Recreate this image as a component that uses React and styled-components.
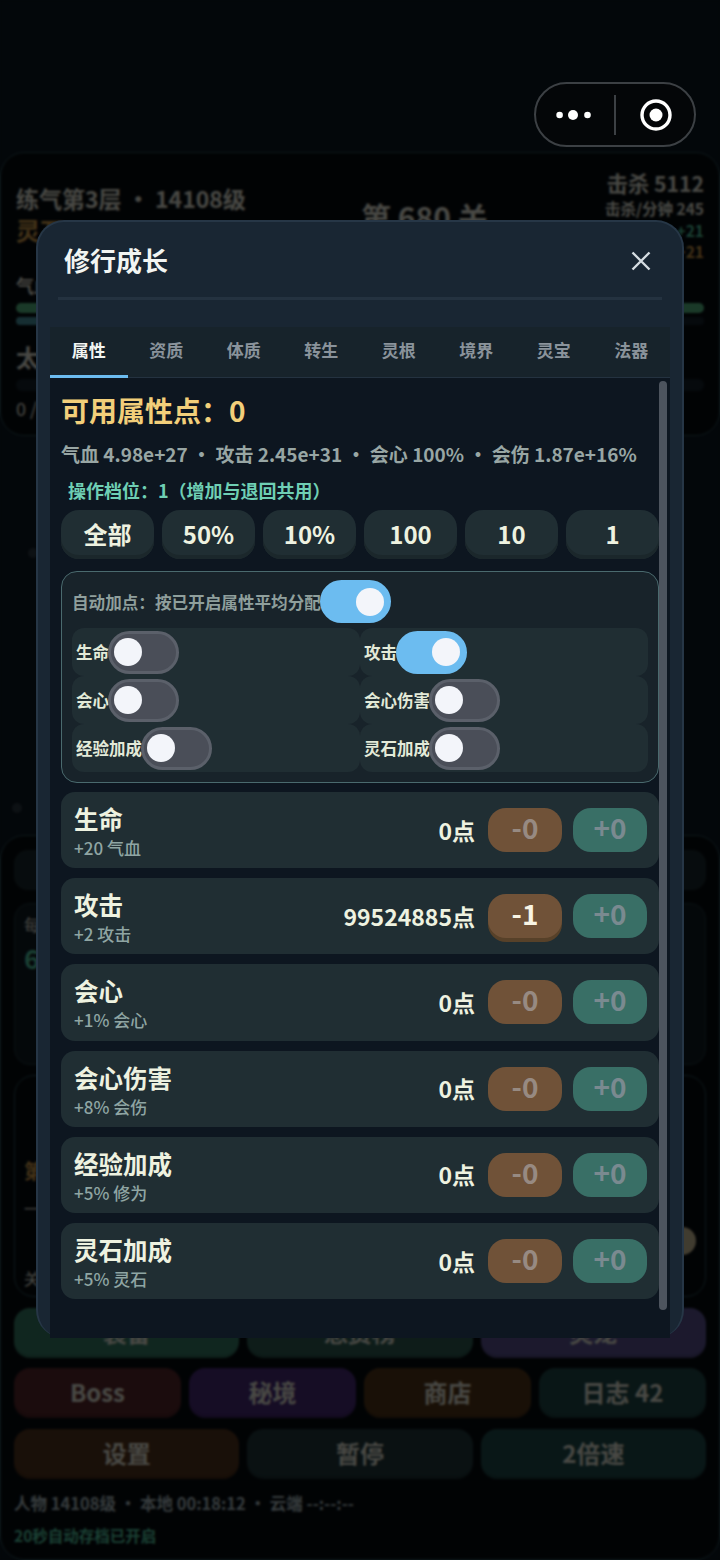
import React from "react"
import styled, { createGlobalStyle } from "styled-components"

const stepOptions = ["全部", "50%", "10%", "100", "10", "1"]
const tabs = ["属性", "资质", "体质", "转生", "灵根", "境界", "灵宝", "法器"]

const autoOptions = [
  { label: "生命", on: false },
  { label: "攻击", on: true },
  { label: "会心", on: false },
  { label: "会心伤害", on: false },
  { label: "经验加成", on: false },
  { label: "灵石加成", on: false },
]

const attrs = [
  { name: "生命", desc: "+20 气血", points: "0点", minus: "-0" },
  { name: "攻击", desc: "+2 攻击", points: "99524885点", minus: "-1", canMinus: true },
  { name: "会心", desc: "+1% 会心", points: "0点", minus: "-0" },
  { name: "会心伤害", desc: "+8% 会伤", points: "0点", minus: "-0" },
  { name: "经验加成", desc: "+5% 修为", points: "0点", minus: "-0" },
  { name: "灵石加成", desc: "+5% 灵石", points: "0点", minus: "-0" },
]

const App = () => (
  <Page>
    <GlobalStyle />
    <HeroCard>
      <HeroTop>
        <HeroLeft>
          <HeroName>练气第3层 · 14108级</HeroName>
          <HeroGold>灵石 2.31e+18</HeroGold>
        </HeroLeft>
        <StageTitle>第 680 关</StageTitle>
        <HeroStats>
          <KillCount>击杀 5112</KillCount>
          <SmallStat>击杀/分钟 245</SmallStat>
          <SmallStat color="#58d4ac">修为 +21</SmallStat>
          <SmallStat color="#e0a850">灵石 +21</SmallStat>
        </HeroStats>
      </HeroTop>
      <BarLabel>气血</BarLabel>
      <HpBar />
      <ExpBar>
        <ExpFill />
      </ExpBar>
      <HeroRealm>太初</HeroRealm>
      <FaintBar />
      <HeroProgress>0 / 100</HeroProgress>
    </HeroCard>

    <Spark top={548} left={28} />
    <Spark top={803} left={12} />

    <MainCard>
      <GhostBox />
      <OutputBox>
        <GhostLabel>每秒</GhostLabel>
        <GhostValue>6.21e+30</GhostValue>
      </OutputBox>
      <StageBox>
        <GhostGold>第 680 关</GhostGold>
        <GhostLabel gap={10}>一</GhostLabel>
        <GhostLabel gap={46}>关卡</GhostLabel>
        <SliderThumb />
      </StageBox>
      <ActionRow columns={3}>
        <ActionButton color="#38806a">装备</ActionButton>
        <ActionButton color="#2f6056">悬赏榜</ActionButton>
        <ActionButton color="#5e5698">灵宠</ActionButton>
      </ActionRow>
      <ActionRow columns={4}>
        <ActionButton color="#5a282c">Boss</ActionButton>
        <ActionButton color="#4a2c7c">秘境</ActionButton>
        <ActionButton color="#56381a">商店</ActionButton>
        <ActionButton color="#204a4a">日志 42</ActionButton>
      </ActionRow>
      <ActionRow columns={3}>
        <ActionButton color="#56361e">设置</ActionButton>
        <ActionButton color="#223a3e">暂停</ActionButton>
        <ActionButton color="#204e4e">2倍速</ActionButton>
      </ActionRow>
      <FooterLine>人物 14108级 · 本地 00:18:12 · 云端 --:--:--</FooterLine>
      <FooterNote>20秒自动存档已开启</FooterNote>
    </MainCard>

    <Backdrop />

    <Capsule>
      <svg width="36" height="14" viewBox="0 0 36 14">
        <circle cx="3.6" cy="7" r="3.3" fill="#fff" />
        <circle cx="17" cy="7" r="5" fill="#fff" />
        <circle cx="31.5" cy="7" r="3.3" fill="#fff" />
      </svg>
      <CapsuleDivider />
      <RecordIcon width="32" height="32" viewBox="0 0 32 32">
        <circle cx="16" cy="16" r="14" fill="none" stroke="#fff" strokeWidth="3.4" />
        <circle cx="16" cy="16" r="6.5" fill="#fff" />
      </RecordIcon>
    </Capsule>

    <Modal>
      <ModalHeader>
        <ModalTitle>修行成长</ModalTitle>
        <CloseIcon width="20" height="20" viewBox="0 0 20 20">
          <path d="M1.5 1.5 L18.5 18.5 M18.5 1.5 L1.5 18.5" stroke="#d6dde2" strokeWidth="2.4" fill="none" />
        </CloseIcon>
      </ModalHeader>
      <TabStrip>
        {tabs.map((tab, i) => (
          <Tab key={tab} active={i === 0}>
            {tab}
          </Tab>
        ))}
      </TabStrip>
      <ModalBody>
        <PointsTitle>可用属性点：0</PointsTitle>
        <StatsLine>气血 4.98e+27 · 攻击 2.45e+31 · 会心 100% · 会伤 1.87e+16%</StatsLine>
        <StepLabel>操作档位：1（增加与退回共用）</StepLabel>
        <StepRow>
          {stepOptions.map(step => (
            <StepButton key={step}>{step}</StepButton>
          ))}
        </StepRow>
        <AutoBox>
          <AutoHead>
            <AutoTitle>自动加点：按已开启属性平均分配</AutoTitle>
            <Switch on />
          </AutoHead>
          <AutoGrid>
            {autoOptions.map(opt => (
              <AutoCell key={opt.label}>
                <AutoLabel>{opt.label}</AutoLabel>
                <Switch on={opt.on} />
              </AutoCell>
            ))}
          </AutoGrid>
        </AutoBox>
        <AttrList>
          {attrs.map(attr => (
            <AttrRow key={attr.name}>
              <AttrInfo>
                <AttrName>{attr.name}</AttrName>
                <AttrDesc>{attr.desc}</AttrDesc>
              </AttrInfo>
              <AttrPoints>{attr.points}</AttrPoints>
              <MinusButton enabled={attr.canMinus}>{attr.minus}</MinusButton>
              <PlusButton>+0</PlusButton>
            </AttrRow>
          ))}
        </AttrList>
        <ScrollThumb />
      </ModalBody>
    </Modal>
  </Page>
)

export default App

const Switch = ({ on }) => (
  <SwitchTrack on={on}>
    <SwitchKnob />
  </SwitchTrack>
)

const GlobalStyle = createGlobalStyle`
  html, body {
    margin: 0;
    padding: 0;
    background: #0c1822;
    font-family: "Noto Sans CJK SC", "Noto Sans", sans-serif;
  }
  * {
    box-sizing: border-box;
  }
`

const Page = styled.div`
  position: relative;
  width: 720px;
  height: 1560px;
  padding-top: 152px;
  overflow: hidden;
  background: #0c1822;
`

const Backdrop = styled.div`
  position: absolute;
  inset: 0;
  background: rgba(0, 0, 0, 0.7);
  backdrop-filter: blur(1px);
`

const Spark = styled.div`
  position: absolute;
  top: ${props => props.top}px;
  left: ${props => props.left}px;
  width: 10px;
  height: 10px;
  border-radius: 50%;
  background: #2c3a44;
`

const Capsule = styled.div`
  position: absolute;
  top: 82px;
  left: 534px;
  width: 162px;
  height: 65px;
  display: flex;
  align-items: center;
  gap: 22px;
  padding-left: 20px;
  border: 2px solid #3c4044;
  border-radius: 33px;
  background: #040608;
`

const CapsuleDivider = styled.div`
  width: 2px;
  height: 40px;
  background: #3c4044;
`

const RecordIcon = styled.svg`
  margin-left: 2px;
`

const HeroCard = styled.section`
  height: 284px;
  padding: 18px 15px 0;
  border: 1px solid #2b5059;
  border-radius: 24px;
  background: #060c10;
  color: #f0f0e2;
`

const HeroTop = styled.div`
  display: flex;
  height: 100px;
`

const HeroLeft = styled.div`
  flex: none;
  width: 345px;
`

const HeroName = styled.div`
  margin-top: 10px;
  font-size: 23px;
  line-height: 34px;
  font-weight: 700;
`

const HeroGold = styled.div`
  font-size: 24px;
  line-height: 30px;
  font-weight: 700;
  color: #e0a850;
`

const StageTitle = styled.div`
  flex: none;
  margin-top: 23px;
  font-size: 30px;
  line-height: 44px;
  font-weight: 700;
`

const HeroStats = styled.div`
  display: flex;
  flex-direction: column;
  align-items: flex-end;
  margin-left: auto;
  margin-top: -3px;
`

const KillCount = styled.div`
  font-size: 21.2px;
  line-height: 30px;
  font-weight: 700;
`

const SmallStat = styled.div`
  font-size: 15.5px;
  line-height: 21.5px;
  font-weight: 700;
  color: ${props => props.color || "#f0f0e2"};
`

const BarLabel = styled.div`
  margin-top: 2px;
  font-size: 18px;
  line-height: 24px;
  font-weight: 700;
`

const HpBar = styled.div`
  height: 10px;
  margin-top: 6px;
  border-radius: 5px;
  background: #58c088;
`

const ExpBar = styled.div`
  height: 8px;
  margin-top: 4px;
  border-radius: 4px;
  background: #14222c;
  overflow: hidden;
`

const ExpFill = styled.div`
  width: 20%;
  height: 100%;
  background: #4a9aa8;
`

const FaintBar = styled.div`
  height: 12px;
  margin-top: 4px;
  border-radius: 6px;
  background: #14222c;
`

const HeroRealm = styled.div`
  margin-top: 14px;
  font-size: 24px;
  line-height: 36px;
  font-weight: 700;
`

const HeroProgress = styled.div`
  margin-top: 5px;
  font-size: 18px;
  line-height: 24px;
`

const MainCard = styled.section`
  height: 725px;
  margin-top: 399px;
  padding: 14px 13px 0;
  border: 1px solid #2b5059;
  border-radius: 24px;
  background: #060c10;
  color: #f0f0e2;
`

const GhostBox = styled.div`
  height: 40px;
  border-radius: 14px;
  background: #1a2b30;
`

const OutputBox = styled.div`
  height: 162px;
  margin-top: 13px;
  padding: 8px 9px;
  border: 1px solid #1f3a40;
  border-radius: 16px;
  background: #101c22;
`

const StageBox = styled.div`
  position: relative;
  height: 222px;
  margin-top: 10px;
  padding: 80px 9px 0;
  border: 1px solid #2b5059;
  border-radius: 20px;
`

const SliderThumb = styled.div`
  position: absolute;
  top: 151px;
  right: 9px;
  width: 28px;
  height: 28px;
  border-radius: 50%;
  background: #d8c8a0;
`

const GhostLabel = styled.div`
  margin-top: ${props => props.gap || 0}px;
  font-size: 16px;
  line-height: 24px;
`

const GhostValue = styled.div`
  margin-top: 4px;
  font-size: 26px;
  line-height: 36px;
  font-weight: 700;
  color: #58d4ac;
`

const GhostGold = styled.div`
  font-size: 20px;
  line-height: 30px;
  font-weight: 700;
  color: #e0a850;
`

const ActionRow = styled.div`
  display: grid;
  grid-template-columns: repeat(${props => props.columns}, 1fr);
  gap: 8px;
  margin-top: 10.5px;
`

const ActionButton = styled.div`
  height: 50px;
  border-radius: 16px;
  background: ${props => props.color};
  box-shadow: inset 0 -3px 0 rgba(0, 0, 0, 0.15);
  text-align: center;
  font-size: 24px;
  line-height: 47px;
  font-weight: 700;
  color: #f0f0e2;
`

const FooterLine = styled.div`
  margin-top: 12px;
  font-size: 16.5px;
  line-height: 24px;
  font-weight: 700;
  color: #b4c5cb;
`

const FooterNote = styled.div`
  margin-top: 8px;
  font-size: 15.5px;
  line-height: 24px;
  font-weight: 700;
  color: #58d4ac;
`

const Modal = styled.div`
  position: absolute;
  top: 220px;
  left: 36px;
  width: 648px;
  height: 1118px;
  padding: 0 12px;
  border: 2px solid #263646;
  border-bottom: 0;
  border-radius: 28px;
  background: #192633;
  display: flex;
  flex-direction: column;
`

const ModalHeader = styled.div`
  display: flex;
  align-items: center;
  justify-content: space-between;
  height: 78px;
  margin: 0 8px;
  padding: 0 24px 0 6px;
  border-bottom: 3px solid #243240;
  flex: none;
`

const ModalTitle = styled.div`
  font-size: 26px;
  line-height: 38px;
  font-weight: 700;
  color: #f2f5f2;
`

const CloseIcon = styled.svg`
  margin-right: -13px;
  margin-top: 3px;
`

const TabStrip = styled.div`
  display: grid;
  grid-template-columns: repeat(8, 1fr);
  height: 51px;
  margin-top: 27px;
  flex: none;
  border-bottom: 1px solid #243240;
  background: #17232b;
`

const Tab = styled.div`
  height: 51px;
  text-align: center;
  font-size: 17px;
  line-height: 46px;
  font-weight: 700;
  color: ${props => (props.active ? "#f2f5f2" : "#8a939b")};
  border-bottom: 3px solid ${props => (props.active ? "#6cbcf0" : "transparent")};
`

const ModalBody = styled.div`
  position: relative;
  flex: 1;
  padding: 12px 11px 0;
  background: #0d1620;
`

const ScrollThumb = styled.div`
  position: absolute;
  top: 3px;
  right: 3px;
  width: 8px;
  height: 929px;
  border-radius: 4px;
  background: #4d545e;
`

const PointsTitle = styled.div`
  font-size: 28px;
  line-height: 40px;
  font-weight: 700;
  color: #f2cf7a;
`

const StatsLine = styled.div`
  margin-top: 10px;
  font-size: 19px;
  line-height: 28px;
  font-weight: 700;
  color: #98a6a4;
  white-space: nowrap;
`

const StepLabel = styled.div`
  margin-top: 10px;
  padding-left: 7px;
  font-size: 18px;
  line-height: 24px;
  font-weight: 700;
  color: #6fcfb4;
`

const StepRow = styled.div`
  display: grid;
  grid-template-columns: repeat(6, 1fr);
  gap: 8px;
  margin-top: 8px;
`

const StepButton = styled.div`
  height: 49px;
  border-radius: 18px;
  background: #202e33;
  box-shadow: inset 0 -4px 0 #1b272b;
  text-align: center;
  font-size: 24px;
  line-height: 47px;
  font-weight: 700;
  color: #eef2e0;
`

const AutoBox = styled.div`
  height: 212px;
  margin-top: 12px;
  padding: 8px 10px 0;
  border: 1px solid #4a6a6e;
  border-radius: 16px;
  background: #18232a;
`

const AutoHead = styled.div`
  display: flex;
  align-items: center;
  height: 43px;
  margin-bottom: 5px;
`

const AutoTitle = styled.div`
  margin-right: -1px;
  font-size: 16.6px;
  line-height: 24px;
  font-weight: 700;
  color: #8f9f9c;
  white-space: nowrap;
`

const AutoGrid = styled.div`
  display: grid;
  grid-template-columns: 1fr 1fr;
  grid-auto-rows: 48px;
`

const AutoCell = styled.div`
  display: flex;
  align-items: center;
  padding-left: 4px;
  border-radius: 12px;
  background: #202e33;
`

const AutoLabel = styled.div`
  margin-right: -1px;
  font-size: 16.5px;
  line-height: 24px;
  font-weight: 700;
  color: #e3ead8;
  white-space: nowrap;
`

const SwitchTrack = styled.div`
  display: flex;
  align-items: center;
  justify-content: ${props => (props.on ? "flex-end" : "flex-start")};
  flex: none;
  width: 71px;
  height: 43px;
  padding: 0 4px 0 3px;
  border: 3px solid ${props => (props.on ? "#6cbcf0" : "#5b606a")};
  border-radius: 22px;
  background: ${props => (props.on ? "#6cbcf0" : "#4a4e58")};
`

const SwitchKnob = styled.div`
  width: 28px;
  height: 28px;
  border-radius: 50%;
  background: #f3f5fa;
`

const AttrList = styled.div`
  display: flex;
  flex-direction: column;
  gap: 10px;
  margin-top: 9px;
`

const AttrRow = styled.div`
  display: flex;
  align-items: center;
  height: 76.2px;
  padding: 0 12px 0 13px;
  border-radius: 14px;
  background: #202e33;
`

const AttrInfo = styled.div`
  flex: 1;
  padding-top: 3px;
`

const AttrName = styled.div`
  font-size: 24.5px;
  line-height: 32px;
  font-weight: 700;
  color: #eef2e0;
`

const AttrDesc = styled.div`
  margin-top: 1px;
  font-size: 17px;
  line-height: 24px;
  font-weight: 500;
  color: #8fa5a3;
`

const AttrPoints = styled.div`
  margin-top: -1px;
  margin-right: 13px;
  font-size: 23px;
  line-height: 32px;
  font-weight: 700;
  color: #eef2e0;
`

const MinusButton = styled.div`
  width: 74px;
  height: 44px;
  border-radius: 18px;
  background: #705238;
  box-shadow: ${props => (props.enabled ? "0 4px 0 #574129" : "none")};
  text-align: center;
  font-size: 28px;
  line-height: 39px;
  font-weight: 700;
  color: ${props => (props.enabled ? "#f8f4e4" : "#978a82")};
`

const PlusButton = styled(MinusButton)`
  margin-left: 11px;
  background: #396f66;
  color: #7a8a90;
`
